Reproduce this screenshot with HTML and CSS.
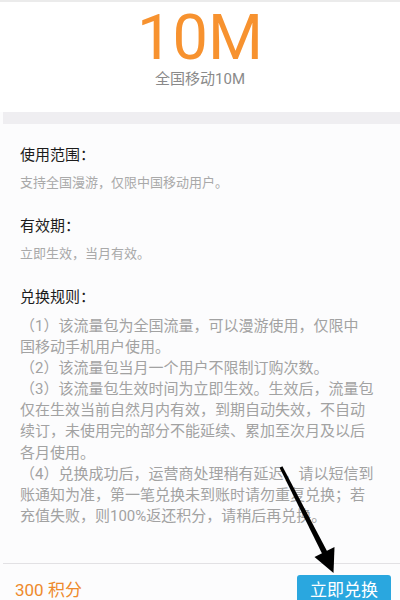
FILE: index.html
```html
<!DOCTYPE html>
<html lang="zh-CN">
<head>
<meta charset="utf-8">
<title>全国移动10M</title>
<link rel="stylesheet" href="styles.css">
</head>
<body>
<div class="page">
  <header class="hero">
    <div class="amount">10M</div>
    <div class="name">全国移动10M</div>
  </header>
  <div class="band"></div>
  <main class="details">
    <section class="block">
      <div class="label">使用范围：</div>
      <div class="desc">支持全国漫游，仅限中国移动用户。</div>
    </section>
    <section class="block">
      <div class="label">有效期：</div>
      <div class="desc">立即生效，当月有效。</div>
    </section>
    <section class="block">
      <div class="label">兑换规则：</div>
      <div class="rules">（1）该流量包为全国流量，可以漫游使用，仅限中<br>国移动手机用户使用。<br>（2）该流量包当月一个用户不限制订购次数。<br>（3）该流量包生效时间为立即生效。生效后，流量包<br>仅在生效当前自然月内有效，到期自动失效，不自动<br>续订，未使用完的部分不能延续、累加至次月及以后<br>各月使用。<br>（4）兑换成功后，运营商处理稍有延迟，请以短信到<br>账通知为准，第一笔兑换未到账时请勿重复兑换；若<br>充值失败，则100%返还积分，请稍后再兑换。</div>
    </section>
  </main>
  <div class="divider"></div>
  <footer class="bar">
    <div class="points">300 积分</div>
    <button class="redeem">立即兑换</button>
  </footer>
</div>
<svg class="arrow" width="400" height="600" viewBox="0 0 400 600" aria-hidden="true">
  <polygon points="282.4,466.3 279.6,467.7 322.5,554.5 327.5,552" fill="#000"/>
  <polygon points="333.5,573 314.5,557 334.5,547" fill="#000"/>
</svg>
</body>
</html>
```

FILE: styles.css
```css
html, body {
  margin: 0;
  padding: 0;
  height: 600px;
  overflow: hidden;
}
body {
  font-family: Roboto, "Noto Sans CJK SC", sans-serif;
  background: #fcfcfd;
  position: relative;
}
.page {
  display: flex;
  flex-direction: column;
  height: 600px;
}
.hero {
  background: #fff;
  border-top: 2px solid #ebebeb;
  height: 112px;
  box-sizing: border-box;
  display: flex;
  flex-direction: column;
  align-items: center;
  padding-top: 10.5px;
}
.amount {
  color: #f7922f;
  font-size: 63px;
  line-height: 50px;
  font-weight: 400;
}
.name {
  color: #8a8a8a;
  font-size: 15px;
  line-height: 20px;
  margin-top: 6.5px;
}
.band {
  height: 12px;
  margin-left: 3px;
  background: #efeef1;
}
.details {
  flex: 1;
  padding: 21px 20px 0;
  background: #fcfcfd;
}
.block + .block {
  margin-top: 24px;
}
.label {
  font-size: 15px;
  line-height: 20px;
  color: #1c1c1c;
}
.desc {
  margin-top: 9px;
  font-size: 13px;
  line-height: 18px;
  color: #a9a9a9;
}
.rules {
  margin-top: 9px;
  font-size: 15px;
  line-height: 21.1px;
  color: #a2a2a2;
  white-space: nowrap;
}
.divider {
  height: 1px;
  margin-left: 3px;
  background: #e2e1e4;
}
.bar {
  height: 36px;
  display: flex;
  justify-content: space-between;
  align-items: flex-start;
  padding: 11px 9px 0 15px;
  box-sizing: border-box;
  background: #fcfcfd;
}
.points {
  color: #ee8a2c;
  font-size: 17px;
  line-height: 30px;
}
.redeem {
  border: 0;
  margin: 0;
  width: 94px;
  height: 30px;
  border-radius: 3px 3px 0 0;
  background: #2aa7df;
  color: #fff;
  font-family: Roboto, "Noto Sans CJK SC", sans-serif;
  font-size: 17px;
  line-height: 30px;
  padding: 0;
  flex: none;
}
.arrow {
  position: absolute;
  top: 0;
  left: 0;
  pointer-events: none;
}
```
